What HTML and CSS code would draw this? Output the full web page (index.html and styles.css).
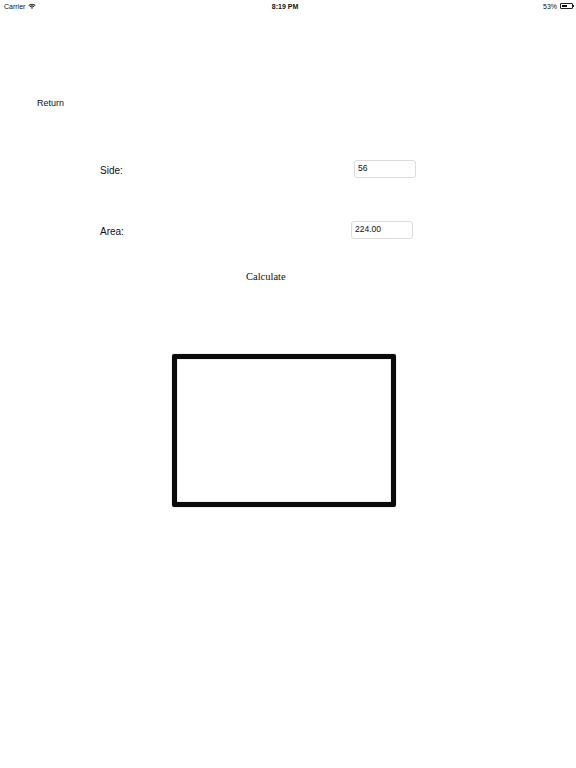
FILE: index.html
```html
<!DOCTYPE html>
<html>
<head>
<meta charset="utf-8">
<link rel="stylesheet" href="styles.css">
</head>
<body>
<div class="status">
  <div class="status-left">Carrier
    <svg class="wifi" width="8" height="6" viewBox="0 0 8 6"><path d="M0.3 2.2 A5.2 5.2 0 0 1 7.7 2.2 L6.9 3 A4 4 0 0 0 1.1 3 Z M1.6 3.5 A3.4 3.4 0 0 1 6.4 3.5 L5.6 4.3 A2.2 2.2 0 0 0 2.4 4.3 Z M2.9 4.8 A1.6 1.6 0 0 1 5.1 4.8 L4 5.9 Z" fill="#222"/></svg>
  </div>
  <div class="status-time">8:19 PM</div>
  <div class="status-right">53%
    <span class="battery"><span class="battery-fill"></span></span><span class="battery-tip"></span>
  </div>
</div>
<div class="return">Return</div>
<div class="row row-side">
  <div class="label label-side">Side:</div>
  <div class="field field-side">56</div>
</div>
<div class="row row-area">
  <div class="label label-area">Area:</div>
  <div class="field field-area">224.00</div>
</div>
<div class="calc">Calculate</div>
<div class="shape"></div>
</body>
</html>
```
FILE: styles.css
```css
html, body {
  margin: 0;
  padding: 0;
  background: #fff;
}
body {
  font-family: "Liberation Sans", Arial, sans-serif;
  color: #111;
  width: 576px;
  height: 768px;
  overflow: hidden;
}
.status {
  height: 12px;
  display: flex;
  align-items: center;
  justify-content: space-between;
  font-size: 7px;
  padding: 0 2px 0 4px;
  position: relative;
}
.status-left {
  display: flex;
  align-items: center;
  gap: 3px;
  width: 100px;
}
.status-time {
  font-weight: 600;
  margin-left: -8px;
}
.status-right {
  width: 100px;
  display: flex;
  align-items: center;
  justify-content: flex-end;
  gap: 2px;
}
.battery {
  display: inline-block;
  width: 13px;
  height: 6px;
  border: 0.8px solid #222;
  border-radius: 1px;
  padding: 0.7px;
  box-sizing: border-box;
  margin-left: 1px;
}
.battery-fill {
  display: block;
  width: 55%;
  height: 100%;
  background: #111;
}
.battery-tip {
  display: inline-block;
  width: 1px;
  height: 2px;
  background: #222;
  margin-left: -2px;
}
.return {
  font-size: 9px;
  line-height: 11px;
  margin: 86px 0 0 37px;
}
.row {
  display: flex;
  align-items: center;
}
.row-side {
  margin-top: 51px;
}
.row-area {
  margin-top: 43px;
}
.label {
  font-size: 10px;
  line-height: 12px;
}
.label-side {
  width: 254px;
  padding-left: 100px;
  margin-top: 4px;
}
.label-area {
  width: 251px;
  padding-left: 100px;
  margin-top: 3px;
}
.field {
  width: 62px;
  height: 18px;
  box-sizing: border-box;
  border: 1px solid #dcdcdc;
  border-radius: 3px;
  font-size: 8.5px;
  line-height: 15px;
  padding-left: 3px;
}
.calc {
  font-family: "Liberation Serif", "Times New Roman", serif;
  font-size: 10.5px;
  line-height: 12px;
  margin: 32px 0 0 246px;
}
.shape {
  margin: 71px 0 0 172px;
  width: 224px;
  height: 153px;
  box-sizing: border-box;
  border: 5px solid #0a0a0a;
  border-radius: 2px;
  box-shadow: 0 0 1px #666, inset 0 0 1px #666;
}
```
